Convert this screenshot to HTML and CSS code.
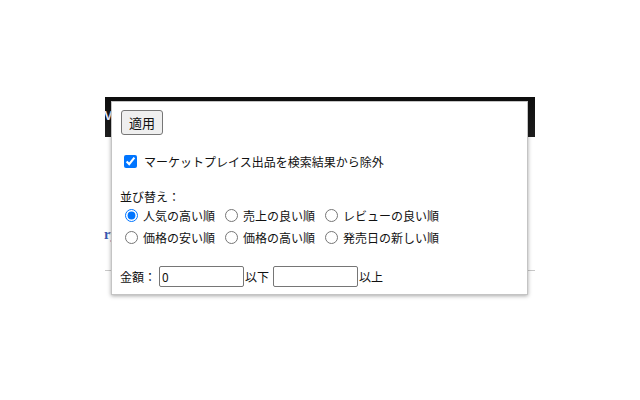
FILE: index.html
```html
<!DOCTYPE html>
<html lang="ja">
<head>
<meta charset="utf-8">
<link rel="stylesheet" href="styles.css">
</head>
<body>
<div class="stage">
  <div class="site">
    <div class="site-header"><span class="site-logo">V</span></div>
    <div class="site-body">
      <span class="site-link">ry</span>
    </div>
    <div class="site-rule"></div>
  </div>

  <div class="popup">
    <div class="row-apply"><button class="apply">適用</button></div>
    <label class="row-check"><input type="checkbox" checked><span>マーケットプレイス出品を検索結果から除外</span></label>
    <div class="sort">
      <div class="sort-title">並び替え：</div>
      <div class="sort-grid">
        <label class="opt"><input type="radio" name="s" checked> 人気の高い順</label>
        <label class="opt"><input type="radio" name="s"> 売上の良い順</label>
        <label class="opt"><input type="radio" name="s"> レビューの良い順</label>
        <label class="opt"><input type="radio" name="s"> 価格の安い順</label>
        <label class="opt"><input type="radio" name="s"> 価格の高い順</label>
        <label class="opt"><input type="radio" name="s"> 発売日の新しい順</label>
      </div>
    </div>
    <div class="price">
      <span class="lbl">金額：</span><input class="num" type="text" value="0"><span class="unit">以下</span><input class="num" type="text" value=""><span class="unit">以上</span>
    </div>
  </div>
</div>
</body>
</html>
```
FILE: styles.css
```css
html, body {
  margin: 0;
  padding: 0;
  background: #fff;
}
body {
  font-family: "Noto Sans CJK JP", "Noto Sans", sans-serif;
  font-size: 12px;
  color: #111;
}
.stage {
  position: relative;
  width: 640px;
  height: 400px;
  overflow: hidden;
}
.site {
  padding-top: 97px;
  margin-left: 105px;
  width: 430px;
}
.site-header {
  height: 40px;
  background: linear-gradient(#0e0e0e, #1e1e1e);
  display: flex;
  align-items: center;
}
.site-logo {
  color: #e8e8ff;
  font-family: "Liberation Sans", sans-serif;
  font-size: 13px;
  font-weight: bold;
  margin-left: -1px;
  margin-top: -4px;
}
.site-body {
  height: 133px;
  position: relative;
}
.site-link {
  position: absolute;
  left: -1px;
  top: 90px;
  color: #3858b0;
  font-family: "Liberation Serif", serif;
  font-size: 14px;
  font-weight: bold;
}
.site-rule {
  height: 1px;
  background: #c8c8c8;
}

.popup {
  position: absolute;
  left: 111px;
  top: 101px;
  width: 407px;
  height: 192px;
  background: #fff;
  border: 1px solid #c4c4c4;
  box-shadow: 0 1px 4px rgba(0,0,0,0.35);
  padding: 0 0 0 8px;
  box-sizing: content-box;
}
.row-apply {
  padding-top: 8px;
}
.apply {
  font-family: inherit;
  font-size: 13px;
  height: 25px;
  width: 42px;
  padding: 0;
  margin: 0 0 0 1px;
  background: #efefef;
  border: 1px solid #767676;
  border-radius: 3px;
  color: #111;
}
.row-check {
  display: flex;
  align-items: center;
  margin-top: 17px;
  height: 18px;
}
.row-check input {
  width: 13px;
  height: 13px;
  margin: 0 7px 0 4px;
  accent-color: #0075ff;
}
.sort {
  margin-top: 18px;
}
.sort-title {
  height: 18px;
  line-height: 18px;
}
.sort-grid {
  display: grid;
  grid-template-columns: 100px 100px auto;
  row-gap: 4px;
}
.opt {
  display: flex;
  align-items: center;
  height: 18px;
  white-space: nowrap;
}
.opt input {
  width: 13px;
  height: 13px;
  margin: 0 5px 0 5px;
  accent-color: #0075ff;
}
.price {
  display: flex;
  align-items: center;
  margin-top: 20px;
}
.lbl {
  margin-right: 3px;
}
.num {
  width: 79px;
  height: 17px;
  padding: 1px 2px;
  margin: 0;
  border: 1px solid #767676;
  border-radius: 2px;
  font-family: inherit;
  font-size: 12px;
  color: #111;
  outline: none;
}
.unit {
  margin: 0 4px 0 1px;
}
```
